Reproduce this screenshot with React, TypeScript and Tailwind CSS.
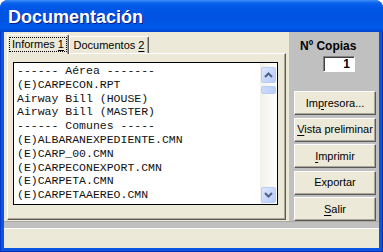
import React from "react";

const LINES = [
  "------ Aérea -------",
  "(E)CARPECON.RPT",
  "Airway Bill (HOUSE)",
  "Airway Bill (MASTER)",
  "------ Comunes -----",
  "(E)ALBARANEXPEDIENTE.CMN",
  "(E)CARP_00.CMN",
  "(E)CARPECONEXPORT.CMN",
  "(E)CARPETA.CMN",
  "(E)CARPETAAEREO.CMN",
];

const ui = { fontFamily: '"Liberation Sans", Arial, sans-serif' };

function Mn({ children }: { children: React.ReactNode }) {
  return <span className="underline underline-offset-[2px]">{children}</span>;
}

function XpButton({ children }: { children: React.ReactNode }) {
  return (
    <div className="h-[24px] w-full flex items-center justify-center bg-[#ECE9D8] border border-t-white border-l-white border-r-[#5A5A5A] border-b-[#5A5A5A] shadow-[inset_-1px_-1px_0_#ACA899] text-[11px] text-black leading-none whitespace-nowrap">
      <span>{children}</span>
    </div>
  );
}

function Chevron({ up }: { up?: boolean }) {
  return (
    <svg width="9" height="6" viewBox="0 0 9 6">
      <path
        d={up ? "M1 5 L4.5 1.5 L8 5" : "M1 1 L4.5 4.5 L8 1"}
        fill="none"
        stroke="#4D6185"
        strokeWidth="2"
      />
    </svg>
  );
}

function ScrollBar() {
  return (
    <div className="w-[17px] h-full flex flex-col items-center pt-[4px] pb-[1px] bg-gradient-to-r from-[#F3F1EC] to-[#FEFEFB]">
      <div className="w-[15px] h-[16px] rounded-[2px] border border-[#B9CDF7] bg-gradient-to-br from-[#DCE6FD] to-[#B8CCF9] flex items-center justify-center">
        <Chevron up />
      </div>
      <div className="mt-[3px] w-[15px] h-[8px] rounded-[2px] border border-[#B9CDF7] bg-gradient-to-r from-[#CBD9FC] to-[#BCCFFA]" />
      <div className="flex-1" />
      <div className="w-[15px] h-[16px] rounded-[2px] border border-[#B9CDF7] bg-gradient-to-br from-[#DCE6FD] to-[#B8CCF9] flex items-center justify-center">
        <Chevron />
      </div>
    </div>
  );
}

export default function App() {
  return (
    <div className="w-[383px] h-[252px] bg-white" style={ui}>
      <div className="w-[383px] h-[252px] flex flex-col rounded-t-[8px] overflow-hidden bg-[#0A52DE]">
        {/* Title bar */}
        <div className="h-[32px] flex items-center pl-[8px] pt-[1px] bg-[linear-gradient(180deg,#3C8EF8_0%,#0A62EC_10%,#0056E6_25%,#0052E2_60%,#005AEA_85%,#0047D2_100%)]">
          <span className="text-white font-bold text-[18px] leading-none [text-shadow:1px_1px_0_#0A1E8A]">
            Documentación
          </span>
        </div>

        {/* Frame */}
        <div className="flex-1 flex px-[4px] pb-[4px] bg-[#0A55E2] shadow-[inset_1px_0_0_#0838C8,inset_-1px_0_0_#0830B0,inset_0_-1px_0_#0830B0]">
          <div className="flex-1 flex flex-col bg-[#C0C0C0]">
            <div className="h-[189px] flex">
              {/* Tab control */}
              <div className="w-[285px] h-full bg-[#ECE9D8] flex flex-col pl-[3px] pr-[3px] pt-[2px] pb-[1px]">
                <div className="h-[19px] flex items-end text-[11px] text-black leading-none whitespace-nowrap">
                  <div className="relative z-10 -mb-[1px] h-[20px] w-[62px] bg-[#ECE9D8] border-t border-l border-t-white border-l-white border-r border-r-[#5A5A5A] rounded-t-[2px] shadow-[inset_-1px_0_0_#ACA899] flex items-center justify-center">
                    <span className="px-[2px] py-[1px] border border-dotted border-black">
                      Informes <Mn>1</Mn>
                    </span>
                  </div>
                  <div className="h-[17px] w-[80px] border-t border-l border-t-white border-l-white border-r border-r-[#5A5A5A] rounded-t-[2px] shadow-[inset_-1px_0_0_#ACA899] flex items-center justify-center">
                    <span>
                      Documentos <Mn>2</Mn>
                    </span>
                  </div>
                </div>
                <div className="flex-1 border border-t-white border-l-white border-r-[#5A5A5A] border-b-[#5A5A5A] shadow-[inset_-1px_-1px_0_#ACA899] pl-[5px] pt-[8px]">
                  {/* List box */}
                  <div className="w-[265px] h-[143px] border border-black bg-white flex">
                    <div
                      className="flex-1 pl-[3px] pt-[1px] text-[11.5px] leading-[13.8px] text-[#111] whitespace-pre"
                      style={{ fontFamily: '"Liberation Mono", "Courier New", monospace' }}
                    >
                      {LINES.map((l) => (
                        <div key={l}>{l}</div>
                      ))}
                    </div>
                    <ScrollBar />
                  </div>
                </div>
              </div>

              {/* Right panel */}
              <div className="flex-1 flex flex-col pl-[5px] pr-[3px] pt-[7px]">
                <div className="pl-[6px] text-[12px] font-bold leading-[14px] text-black">
                  Nº Copias
                </div>
                <div className="mt-[3px] ml-[29px] w-[32px] h-[16px] bg-white border border-t-[#808080] border-l-[#808080] border-r-white border-b-white shadow-[inset_1px_1px_0_#404040] flex items-center justify-end pr-[4px] text-[12px] font-bold leading-none">
                  1
                </div>
                <div className="mt-[19px] flex flex-col gap-[2.5px]">
                  <XpButton>
                    Im<Mn>p</Mn>resora...
                  </XpButton>
                  <XpButton>
                    <Mn>V</Mn>ista preliminar
                  </XpButton>
                  <XpButton>
                    <Mn>I</Mn>mprimir
                  </XpButton>
                  <XpButton>Exportar</XpButton>
                  <XpButton>
                    <Mn>S</Mn>alir
                  </XpButton>
                </div>
              </div>
            </div>

            {/* Gray band */}
            <div className="h-[7px] bg-[#C0C0C0] border-t border-t-[#ACA899]" />
            {/* Status area */}
            <div className="flex-1 bg-[#ECE9D8] border-t border-t-white" />
          </div>
        </div>
      </div>
    </div>
  );
}
